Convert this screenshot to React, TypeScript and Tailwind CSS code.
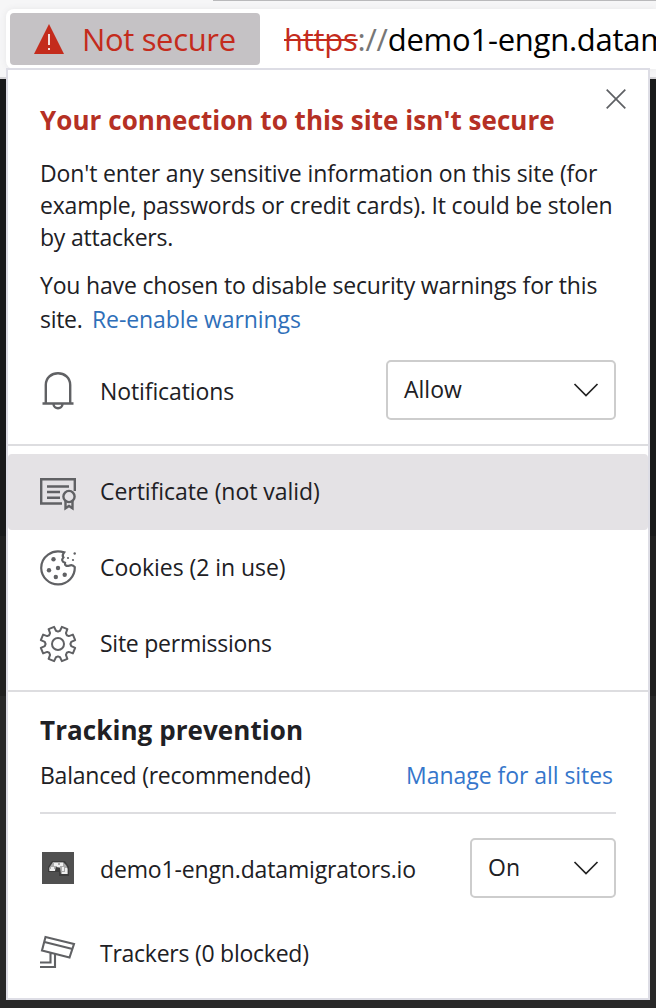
import React from "react";

const rule = "h-[2px] shrink-0 bg-[#dddde0]";
const icon = "h-[36px] w-[36px] shrink-0 overflow-visible fill-none stroke-[#606164]";

function Chevron() {
  return (
    <svg viewBox="0 0 26 14" className="h-[14px] w-[26px] fill-none stroke-[#222]" strokeWidth="1.7">
      <path d="M1.5 1 13 12.5 24.5 1" />
    </svg>
  );
}

function Select({ children, width }: { children: React.ReactNode; width: string }) {
  return (
    <button className={`flex h-[60px] items-center justify-between rounded-[5px] border-2 border-[#cdcdcd] pr-[15px] pl-[16px] ${width}`}>
      <span className="-mt-[2px]">{children}</span>
      <Chevron />
    </button>
  );
}

function Bell() {
  return (
    <svg viewBox="0 0 36 36" className={icon} strokeWidth="2.4">
      <path d="M2.5 31.5H33.5M5.8 31V13C5.8-2.6 30.2-2.6 30.2 13V31M13.5 32C13.5 37.6 22.5 37.6 22.5 32" />
    </svg>
  );
}

function Certificate() {
  return (
    <svg viewBox="0 0 36 36" className={icon} strokeWidth="2.4">
      <path d="M22 29.5H1.2V5.2H34.8V17M7 12.5H29M7 18H20M7 23.7H20" />
      <circle cx="29" cy="22.5" r="5.6" />
      <path d="M25.5 27V34.3L29 32 32.5 34.3V27" />
    </svg>
  );
}

function Cookie() {
  return (
    <svg viewBox="0 0 36 36" className={icon} strokeWidth="2.2">
      <path d="M24.2 2.4C12-1.6 1.2 7 1.2 18A16.8 16.8 0 0 0 34.8 17.2C33 14.6 31 14.6 29 15.8C26 16.5 24.6 14.8 25 12.8C21.5 11.6 21.6 9.4 23.4 7.4C22 5.6 22.8 4 24.2 2.4Z" />
      <g className="fill-[#606164] stroke-none">
        <circle cx="13.5" cy="9.2" r="2.2" />
        <circle cx="9" cy="20.2" r="2.2" />
        <circle cx="18" cy="18" r="2.2" />
        <circle cx="15.8" cy="27" r="2.2" />
        <circle cx="24.7" cy="24.7" r="2.2" />
        <circle cx="28" cy="8" r="1.1" />
        <circle cx="34.7" cy="3.5" r="1.2" />
        <circle cx="33" cy="10" r="1.1" />
      </g>
    </svg>
  );
}

function Gear() {
  const points: string[] = [];
  for (let i = 0; i < 8; i++) {
    const a = (i * 45 - 67.5) * (Math.PI / 180);
    [[-0.24, 13.4], [-0.17, 17.6], [0.17, 17.6], [0.24, 13.4], [0.393, 12.4]].forEach(([d, r]) =>
      points.push(`${(18 + r * Math.cos(a + d)).toFixed(2)},${(18 + r * Math.sin(a + d)).toFixed(2)}`)
    );
  }
  return (
    <svg viewBox="0 0 36 36" className={icon} strokeWidth="2" strokeLinejoin="round">
      <polygon points={points.join(" ")} />
      <circle cx="18" cy="18" r="6" />
    </svg>
  );
}

function Camera() {
  return (
    <svg viewBox="0 0 36 36" className={icon} strokeWidth="2.1">
      <path d="M5.5 3 34 10 29.5 23.5 2 16.5ZM4.5 8 31.5 14.8M0 28.5H10.5V19M0 33H15V20.5" />
    </svg>
  );
}

function SiteIcon() {
  return (
    <svg viewBox="0 0 32 32" className="h-8 w-8 shrink-0">
      <path fill="#505050" d="M0 0H32V32H0Z" />
      <path fill="#3c3c3c" d="M10 9H23L27 15V24H17V20H6V15Z" />
      <path fill="#aaa" d="M11 10H21L24 13 26 17V22H19L18 16 14 15 13 19H7V16Z" />
      <path fill="#eee" d="M12 11H16V14H12ZM18 11H21V14H18ZM9 15H12V17H9ZM20 15H22V19H20ZM23 16H25V21H23ZM15 13H18V15H15ZM20 20H25V22H20ZM8 17H13V19H8Z" />
    </svg>
  );
}

function Row({ glyph, label, spacing, active }: { glyph: React.ReactNode; label: string; spacing: string; active?: boolean }) {
  return (
    <div className={`flex h-[76px] shrink-0 items-center gap-[24px] pl-[32px] ${active ? "rounded-[4px] bg-[#e4e2e5]" : ""}`}>
      {glyph}
      <span className={`-mt-[2px] ${spacing}`}>{label}</span>
    </div>
  );
}

export default function App() {
  return (
    <div className="relative flex h-[1008px] w-[656px] flex-col overflow-hidden bg-[#282828] font-['Open_Sans',sans-serif] text-[23px] leading-[32px] whitespace-nowrap text-[#202024]">
      <div className="h-[79px] shrink-0 border-b-2 border-[#d4d3d6] bg-[#f6f6f7]">
        <div className="ml-[213px] h-px bg-[#b9b9bb]" />
        <div className="mt-[8px] ml-[6px] flex h-[60px] items-center rounded-l-[8px] bg-white pl-[4px] text-[31px] shadow-[0_0_6px_#e6e6e8]">
          <div className="flex h-[52px] w-[250px] shrink-0 items-center rounded-[4px] bg-[#c5c2c5] pl-[24px] text-[#c42b1c]">
            <svg viewBox="0 0 30 30" className="mr-[18px] h-[30px] w-[30px]">
              <path fill="#c42b1c" d="M15 0 30 30H0Z" />
              <path fill="#f4dedd" d="M14 10H16V21H14ZM14 24H16V26H14Z" />
            </svg>
            <span className="tracking-[-0.35px]">Not secure</span>
          </div>
          <div className="ml-[24px] tracking-[-0.25px]">
            <span className="text-[#c42b1c] line-through decoration-2">https</span>
            <span className="text-[#777]">://</span>
            <span className="text-black">demo1-engn.datam</span>
          </div>
        </div>
      </div>
      <div className="h-[457px] shrink-0 bg-[#191a1b]" />
      <div className="h-[160px] shrink-0 bg-[#202020]" />
      <div className="absolute top-[68px] left-[6px] flex h-[932px] w-[644px] flex-col border-2 border-[#dddde5] bg-white">
        <div className="relative flex h-[374px] shrink-0 flex-col px-[32px] pt-[34px]">
          <svg viewBox="0 0 20 20" className="absolute top-[19px] right-[22px] h-[20px] w-[20px] stroke-[#5e6064]" strokeWidth="1.7">
            <path d="M.7.7 19.3 19.3M19.3.7.7 19.3" />
          </svg>
          <h1 className="text-[26px] font-bold tracking-[0.05px] text-[#b53024]">Your connection to this site isn't secure</h1>
          <p className="mt-[21px]">
            <span className="block tracking-[-0.13px]">Don't enter any sensitive information on this site (for</span>
            <span className="block tracking-[-0.18px]">example, passwords or credit cards). It could be stolen</span>
            <span className="block tracking-[-0.22px]">by attackers.</span>
          </p>
          <p className="mt-[16px]">
            <span className="block tracking-[-0.18px]">You have chosen to disable security warnings for this</span>
            <span className="mt-[2px] flex"><span className="w-[52px] tracking-[-0.3px]">site.</span><a className="tracking-[-0.1px] text-[#2f6fb9]">Re-enable warnings</a></span>
          </p>
          <div className="mt-[25px] flex h-[60px] items-center">
            <Bell />
            <span className="mt-[2px] ml-[24px] tracking-[-0.1px]">Notifications</span>
            <div className="ml-auto"><Select width="w-[230px]">Allow</Select></div>
          </div>
        </div>
        <div className={rule} />
        <div className="mt-[8px] flex flex-col">
          <Row glyph={<Certificate />} label="Certificate (not valid)" spacing="tracking-[-0.05px]" active />
          <Row glyph={<Cookie />} label="Cookies (2 in use)" spacing="tracking-[-0.05px]" />
          <Row glyph={<Gear />} label="Site permissions" spacing="tracking-[-0.25px]" />
        </div>
        <div className={`mt-[8px] ${rule}`} />
        <div className="flex flex-col px-[32px] pt-[22px]">
          <h2 className="text-[26px] font-bold tracking-[0.07px]">Tracking prevention</h2>
          <div className="mt-[13px] flex justify-between">
            <span className="tracking-[-0.24px]">Balanced (recommended)</span>
            <a className="mr-[3px] tracking-[-0.05px] text-[#3576cb]">Manage for all sites</a>
          </div>
          <div className={`mt-[21px] ${rule}`} />
          <div className="mt-[24px] flex h-[60px] items-center">
            <div className="ml-[2px]"><SiteIcon /></div>
            <span className="mt-[2px] ml-[26px] tracking-[-0.15px]">demo1-engn.datamigrators.io</span>
            <div className="ml-auto"><Select width="w-[146px]">On</Select></div>
          </div>
          <div className="mt-[36px] flex h-[36px] items-center gap-[24px]">
            <Camera />
            <span className="mt-[2px] tracking-[-0.25px]">Trackers (0 blocked)</span>
          </div>
        </div>
      </div>
    </div>
  );
}
